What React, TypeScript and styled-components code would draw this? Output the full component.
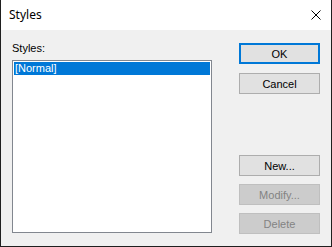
import styled, { createGlobalStyle } from 'styled-components'

const GlobalStyle = createGlobalStyle`
    html, body {
        margin: 0;
        padding: 0;
        background: #ffffff;
    }
`;

const Dialog = styled.div`
    box-sizing: border-box;
    width: 332px;
    height: 247px;
    border: 1px solid #1f1f1f;
    border-top: none;
    display: flex;
    flex-direction: column;
    background: #f0f0f0;
    font-family: "Liberation Sans", Arial, sans-serif;
    font-size: 11px;
    color: #000;
`;

const TitleBar = styled.div`
    height: 30px;
    flex: none;
    background: #ffffff;
    display: flex;
    align-items: center;
    justify-content: space-between;
    padding-left: 8px;
`;

const Title = styled.span`
    font-family: "Noto Sans", "Segoe UI", sans-serif;
    font-size: 12px;
    line-height: 16px;
`;

const CloseButton = styled.div`
    width: 30px;
    height: 30px;
    display: flex;
    align-items: center;
    justify-content: center;
`;

const Body = styled.div`
    flex: 1;
    display: grid;
    grid-template-columns: 200px 81px;
    column-gap: 27px;
    padding: 12px 11px 12px 11px;
`;

const LeftColumn = styled.div`
    display: flex;
    flex-direction: column;
`;

const Label = styled.div`
    line-height: 13px;
    margin-bottom: 5px;
`;

const ListBox = styled.div`
    box-sizing: border-box;
    height: 173px;
    border: 1px solid #82878f;
    background: #ffffff;
    padding: 1px;
`;

const ListItem = styled.div<{ $selected?: boolean }>`
    height: 13px;
    line-height: 13px;
    padding-left: 1px;
    background: ${p => (p.$selected ? '#0078d7' : 'transparent')};
    color: ${p => (p.$selected ? '#ffffff' : '#000000')};
`;

const RightColumn = styled.div`
    display: flex;
    flex-direction: column;
    justify-content: space-between;
    padding-top: 1px;
`;

const ButtonGroup = styled.div<{ $gap: number }>`
    display: flex;
    flex-direction: column;
    gap: ${p => p.$gap}px;
`;

const Button = styled.div<{ $default?: boolean; $disabled?: boolean }>`
    box-sizing: border-box;
    height: 21px;
    display: flex;
    align-items: center;
    justify-content: center;
    background: ${p => (p.$disabled ? '#cccccc' : '#e1e1e1')};
    border: ${p =>
        p.$default ? '2px solid #0078d7' : p.$disabled ? '1px solid #bfbfbf' : '1px solid #adadad'};
    color: ${p => (p.$disabled ? '#838383' : '#000000')};
    font-size: 11px;
`;

export default function App() {
    return (
        <>
            <GlobalStyle />
            <Dialog>
                <TitleBar>
                    <Title>Styles</Title>
                    <CloseButton>
                        <svg width="10" height="10" viewBox="0 0 10 10">
                            <path d="M0.5 0.5 L9.5 9.5 M9.5 0.5 L0.5 9.5" stroke="#000" strokeWidth="1" fill="none" />
                        </svg>
                    </CloseButton>
                </TitleBar>
                <Body>
                    <LeftColumn>
                        <Label>Styles:</Label>
                        <ListBox>
                            <ListItem $selected>[Normal]</ListItem>
                        </ListBox>
                    </LeftColumn>
                    <RightColumn>
                        <ButtonGroup $gap={9}>
                            <Button $default>OK</Button>
                            <Button>Cancel</Button>
                        </ButtonGroup>
                        <ButtonGroup $gap={8}>
                            <Button>New...</Button>
                            <Button $disabled>Modify...</Button>
                            <Button $disabled>Delete</Button>
                        </ButtonGroup>
                    </RightColumn>
                </Body>
            </Dialog>
        </>
    )
}
